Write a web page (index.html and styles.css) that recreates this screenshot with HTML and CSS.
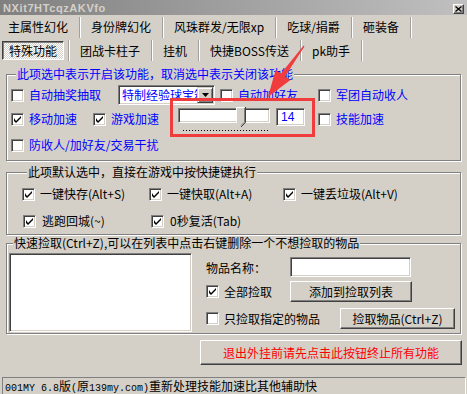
FILE: index.html
```html
<!DOCTYPE html>
<html lang="zh-CN">
<head>
<meta charset="utf-8">
<title>NXit7HTcqzAKVfo</title>
<link rel="stylesheet" href="styles.css">
</head>
<body>
<div class="window">
  <div class="titlebar">
    <span class="title-text">NXit7HTcqzAKVfo</span>
    <span class="close-btn"><svg width="7" height="6" viewBox="0 0 7 6"><path d="M0.5 0.5L6.5 5.5M6.5 0.5L0.5 5.5" stroke="#000" stroke-width="1.3"/></svg></span>
  </div>

  <div class="tabs">
    <div class="tab-row row1">
      <span class="tab first">主属性幻化</span><span class="sep"></span>
      <span class="tab">身份牌幻化</span><span class="sep"></span>
      <span class="tab">风珠群发/无限xp</span><span class="sep"></span>
      <span class="tab">吃球/捐爵</span><span class="sep"></span>
      <span class="tab">砸装备</span><span class="sep"></span>
    </div>
    <div class="tab-row row2">
      <span class="tab active">特殊功能</span><span class="sep"></span>
      <span class="tab">团战卡柱子</span><span class="sep"></span>
      <span class="tab">挂机</span><span class="sep"></span>
      <span class="tab">快捷BOSS传送</span><span class="sep"></span>
      <span class="tab">pk助手</span><span class="sep"></span>
    </div>
  </div>

  <div class="content">
    <fieldset class="group g1">
      <legend class="blue">此项选中表示开启该功能，取消选中表示关闭该功能</legend>
      <div class="row ra">
        <label class="cb blue w-cb1"><span class="box"></span><span>自动抽奖抽取</span></label>
        <div class="combo"><span class="combo-text">特制经验球宝箱</span><span class="combo-btn"><svg width="7" height="4" viewBox="0 0 7 4"><path d="M0 0h7L3.5 4z" fill="#000"/></svg></span></div>
        <label class="cb blue w-cb2"><span class="box"></span><span>自动加好友</span></label>
        <label class="cb blue"><span class="box"></span><span>军团自动收人</span></label>
      </div>
      <div class="row rb">
        <label class="cb blue w-cb3"><span class="box"><svg class="tick" width="7" height="7" viewBox="0 0 7 7"><path d="M0 2v3l2 2 5-5V0L2 5z" fill="#000"/></svg></span><span>移动加速</span></label>
        <label class="cb blue w-cb4"><span class="box"><svg class="tick" width="7" height="7" viewBox="0 0 7 7"><path d="M0 2v3l2 2 5-5V0L2 5z" fill="#000"/></svg></span><span>游戏加速</span></label>
        <div class="slider">
          <div class="channel"></div>
          <div class="thumb"><svg width="10" height="21" viewBox="0 0 10 21"><path d="M0.5 0.5H9.5V15.5L5 20L0.5 15.5Z" fill="#d4d0c8"/><path d="M0.5 15.5V0.5H8.5" fill="none" stroke="#fff"/><path d="M9.5 0V15.5L5 20" fill="none" stroke="#404040"/><path d="M8.5 1V15L5 18.5" fill="none" stroke="#808080"/></svg></div>
          <div class="ticks"></div>
        </div>
        <div class="edit num">14</div>
        <label class="cb blue"><span class="box"></span><span>技能加速</span></label>
      </div>
      <div class="row rc">
        <label class="cb blue"><span class="box"></span><span>防收人/加好友/交易干扰</span></label>
      </div>
    </fieldset>

    <fieldset class="group g2">
      <legend>此项默认选中，直接在游戏中按快捷键执行</legend>
      <div class="row rd">
        <label class="cb w-k1"><span class="box"><svg class="tick" width="7" height="7" viewBox="0 0 7 7"><path d="M0 2v3l2 2 5-5V0L2 5z" fill="#000"/></svg></span><span>一键快存(Alt+S)</span></label>
        <label class="cb w-k2"><span class="box"><svg class="tick" width="7" height="7" viewBox="0 0 7 7"><path d="M0 2v3l2 2 5-5V0L2 5z" fill="#000"/></svg></span><span>一键快取(Alt+A)</span></label>
        <label class="cb"><span class="box"><svg class="tick" width="7" height="7" viewBox="0 0 7 7"><path d="M0 2v3l2 2 5-5V0L2 5z" fill="#000"/></svg></span><span>一键丢垃圾(Alt+V)</span></label>
      </div>
      <div class="row re">
        <label class="cb w-k3"><span class="box"><svg class="tick" width="7" height="7" viewBox="0 0 7 7"><path d="M0 2v3l2 2 5-5V0L2 5z" fill="#000"/></svg></span><span>逃跑回城(~)</span></label>
        <label class="cb"><span class="box"><svg class="tick" width="7" height="7" viewBox="0 0 7 7"><path d="M0 2v3l2 2 5-5V0L2 5z" fill="#000"/></svg></span><span>0秒复活(Tab)</span></label>
      </div>
    </fieldset>

    <fieldset class="group g3">
      <legend>快速捡取(Ctrl+Z),可以在列表中点击右键删除一个不想捡取的物品</legend>
      <div class="pick">
        <div class="listbox"></div>
        <div class="pick-side">
          <div class="prow p1">
            <span class="plabel">物品名称：</span>
            <div class="edit name"></div>
          </div>
          <div class="prow p2">
            <label class="cb w-p"><span class="box"><svg class="tick" width="7" height="7" viewBox="0 0 7 7"><path d="M0 2v3l2 2 5-5V0L2 5z" fill="#000"/></svg></span><span>全部捡取</span></label>
            <button class="btn add">添加到捡取列表</button>
          </div>
          <div class="prow p3">
            <label class="cb w-p3"><span class="box"></span><span>只捡取指定的物品</span></label>
            <button class="btn get">捡取物品(Ctrl+Z)</button>
          </div>
        </div>
      </div>
    </fieldset>

    <button class="btn exit">退出外挂前请先点击此按钮终止所有功能</button>
  </div>

  <div class="status"><span class="mono">001MY 6.8</span>版<span class="mono">(</span>原<span class="mono">139my.com)</span>重新处理技能加速比其他辅助快</div>

  <div class="mark-box"></div>
  <svg class="mark-arrow" width="467" height="394" viewBox="0 0 467 394"><path d="M303.6 45.4L304.4 46.6L285 76.4L290.4 80.1L268 97L275.6 69.9L281 73.6Z" fill="#f03c3c"/></svg>
</div>
</body>
</html>
```

FILE: styles.css
```css
* { box-sizing: border-box; }
html, body { margin: 0; padding: 0; }
body {
  background: #d4d0c8;
  font-family: "Noto Sans CJK SC", "Noto Sans", sans-serif;
  font-size: 12px;
  color: #000;
}
.window {
  position: relative;
  width: 467px;
  height: 394px;
  overflow: hidden;
  background: #d4d0c8;
}
.titlebar {
  height: 15px;
  background: linear-gradient(to right, #808080, #c0c0c0);
  display: flex;
  align-items: center;
  justify-content: space-between;
  padding: 0 3px 0 3px;
}
.title-text {
  font-family: "Liberation Sans", sans-serif;
  font-weight: bold;
  font-size: 11px;
  color: #d4d0c8;
  letter-spacing: 0.6px;
}
.close-btn {
  width: 11px;
  height: 10px;
  background: #d4d0c8;
  border: 1px solid;
  border-color: #fff #404040 #404040 #fff;
  box-shadow: inset -1px -1px #808080;
  display: flex;
  align-items: center;
  justify-content: center;
  margin-top: 2px;
}
.tabs { padding-top: 1px; }
.tab-row {
  display: flex;
  align-items: center;
  line-height: 14px;
}
.row1 { height: 22px; }
.row2 { height: 22px; margin-top: 1px; }
.tab { padding: 0 11px 0 10px; white-space: nowrap; }
.row1 .tab.first { padding-left: 6px; margin-left: 2px; }
.row2 .tab { padding-top: 2px; }
.tab.active {
  margin-left: 2px;
  margin-right: 4px;
  padding: 2px 6px 0 6px;
  height: 19px;
  display: flex;
  align-items: center;
  border: 1px solid;
  border-color: #404040 #fff #fff #404040;
  box-shadow: inset 1px 1px #808080;
  background: repeating-conic-gradient(#fff 0 25%, #d4d0c8 0 50%) 0 0 / 2px 2px;
}
.sep {
  width: 2px;
  height: 21px;
  border-left: 1px solid #a0a0a0;
  border-right: 1px solid #fff;
}

.content {
  padding: 0 6px;
  display: flex;
  flex-direction: column;
}
.group {
  margin: 0;
  padding: 0;
  min-width: 0;
  border: 1px solid #808080;
  box-shadow: inset 1px 1px #fff, 1px 1px #fff;
}
.group legend {
  margin-left: 5px;
  padding: 0 1px;
  line-height: 14px;
  background: #d4d0c8;
  white-space: nowrap;
}
.blue { color: #0000ff; }
.g1 { margin-top: 6px; padding: 4px 0 5px 4px; }
.g2 { margin-top: 4px; padding: 5px 0 3px 15px; }
.g3 { margin-top: 1px; padding: 3px 0 1px 1px; }

.row { display: flex; align-items: center; }
.ra { height: 20px; }
.rb { height: 24px; margin-top: 2px; align-items: flex-start; }
.rc { height: 20px; margin-top: 4px; }
.rd { height: 20px; }
.re { height: 20px; margin-top: 7px; padding-left: 1px; }

.cb {
  display: inline-flex;
  align-items: center;
  gap: 5px;
  white-space: nowrap;
  line-height: 14px;
}
.rb .cb { height: 24px; }
.box {
  width: 13px;
  height: 13px;
  flex: none;
  background: #fff;
  border: 1px solid;
  border-color: #808080 #fff #fff #808080;
  box-shadow: inset 1px 1px #404040, inset -1px -1px #d4d0c8;
  display: flex;
  align-items: center;
  justify-content: center;
}
.tick { display: block; }
.w-cb1 { width: 107px; }
.w-cb2 { width: 98px; margin-left: 5px; }
.w-cb3 { width: 82px; }
.w-cb4 { width: 85px; }
.w-k1 { width: 127px; }
.w-k2 { width: 134px; }
.w-k3 { width: 128px; gap: 6px; }
.re .cb + .cb { gap: 6px; }

.combo {
  width: 97px;
  height: 20px;
  display: flex;
  background: #fff;
  border: 1px solid;
  border-color: #808080 #fff #fff #808080;
  box-shadow: inset 1px 1px #404040, inset -1px -1px #d4d0c8;
  padding: 1px 1px 1px 2px;
}
.combo-text {
  flex: 1;
  overflow: hidden;
  white-space: nowrap;
  color: #0000ff;
  line-height: 16px;
  padding-left: 1px;
}
.combo-btn {
  width: 16px;
  height: 16px;
  flex: none;
  background: #d4d0c8;
  border: 1px solid;
  border-color: #d4d0c8 #404040 #404040 #d4d0c8;
  box-shadow: inset 1px 1px #fff, inset -1px -1px #808080;
  display: flex;
  align-items: center;
  justify-content: center;
}

.slider {
  position: relative;
  width: 92px;
  height: 24px;
  flex: none;
}
.channel {
  margin-top: 1px;
  height: 15px;
  background: #fff;
  border: 1px solid;
  border-color: #808080 #fff #fff #808080;
  box-shadow: inset 1px 1px #404040, inset -1px -1px #d4d0c8;
}
.thumb {
  position: absolute;
  left: 58px;
  top: 0;
  width: 10px;
  height: 21px;
}
.thumb svg { display: block; }
.ticks {
  margin: 7px 0 0 5px;
  width: 85px;
  height: 1px;
  background: repeating-linear-gradient(to right, #000 0 1px, transparent 1px 3px);
}
.edit {
  background: #fff;
  border: 1px solid;
  border-color: #808080 #fff #fff #808080;
  box-shadow: inset 1px 1px #404040, inset -1px -1px #d4d0c8;
}
.edit.num {
  width: 29px;
  height: 18px;
  margin: 1px 0 0 6px;
  color: #0000ff;
  font-family: "Liberation Sans", sans-serif;
  font-size: 12px;
  line-height: 16px;
  padding-left: 4px;
}
.rb > .cb:last-child { margin-left: 13px; }

.pick { display: flex; align-items: flex-start; }
.listbox {
  width: 183px;
  height: 79px;
  margin-left: 1px;
  background: #fff;
  border: 1px solid;
  border-color: #808080 #fff #fff #808080;
  box-shadow: inset 1px 1px #404040, inset -1px -1px #d4d0c8;
}
.pick-side {
  margin-left: 14px;
  display: flex;
  flex-direction: column;
}
.prow { display: flex; align-items: center; }
.p1 { margin-top: 4px; height: 20px; }
.p2 { margin-top: 4px; height: 21px; }
.p3 { margin-top: 6px; height: 21px; }
.plabel { width: 84px; white-space: nowrap; }
.edit.name { width: 121px; height: 20px; }
.w-p { width: 84px; }
.w-p3 { width: 134px; }

.btn {
  font-family: "Noto Sans CJK SC", "Noto Sans", sans-serif;
  font-size: 12px;
  color: #000;
  background: #d4d0c8;
  border: 1px solid;
  border-color: #fff #404040 #404040 #fff;
  box-shadow: inset -1px -1px #808080;
  padding: 0;
  margin: 0;
  line-height: 14px;
}
.btn.add { width: 122px; height: 21px; }
.btn.get { width: 115px; height: 21px; }
.btn.exit {
  width: 262px;
  height: 25px;
  margin: 6px 0 0 194px;
  color: #ff0000;
}

.status {
  margin: 12px 0 0 2px;
  width: 464px;
  height: 18px;
  border: 1px solid;
  border-color: #808080 #fff #fff #808080;
  padding: 0 0 0 2px;
  line-height: 16px;
  font-size: 12px;
  white-space: nowrap;
  font-family: "Noto Sans CJK SC", sans-serif;
}
.mono { font-family: "Liberation Mono", monospace; font-size: 10px; }

.mark-box {
  position: absolute;
  left: 170px;
  top: 98px;
  width: 145px;
  height: 39px;
  border: 3px solid #f03c3c;
  pointer-events: none;
}
.mark-arrow {
  position: absolute;
  left: 0;
  top: 0;
  pointer-events: none;
}
```
